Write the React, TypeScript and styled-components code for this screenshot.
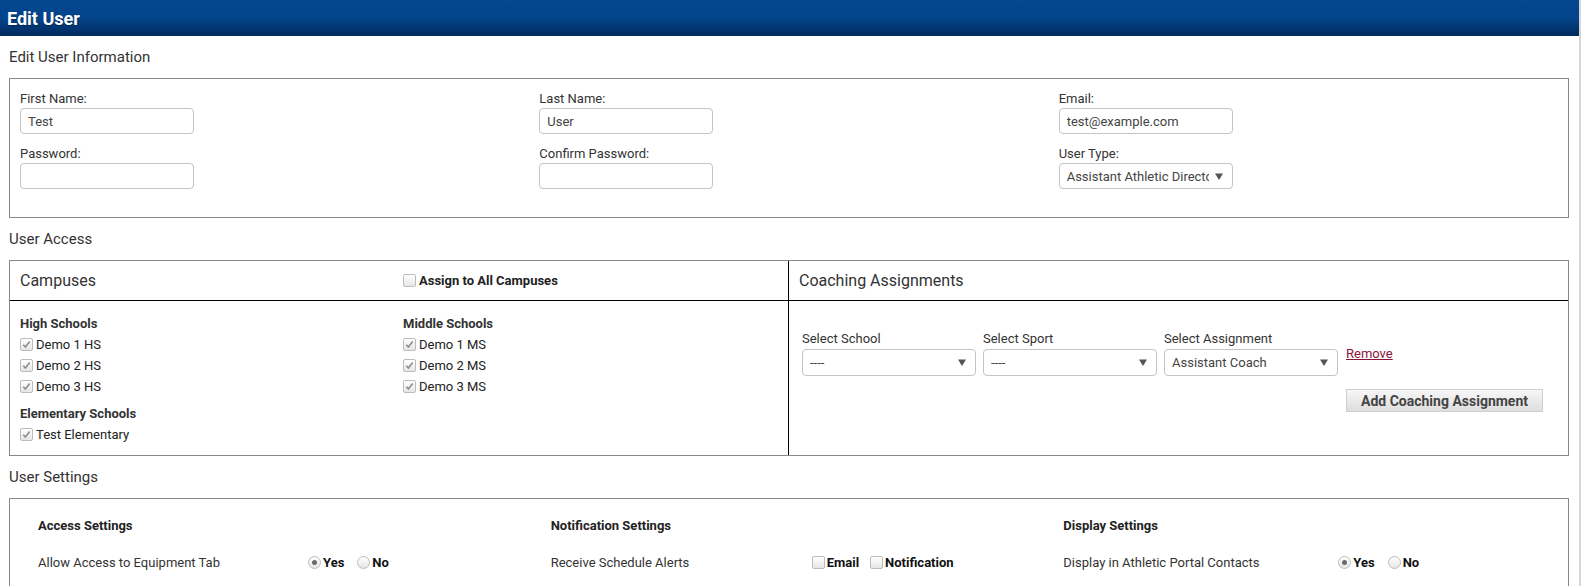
import * as React from 'react';
import styled, { createGlobalStyle } from 'styled-components';

const GlobalStyle = createGlobalStyle`
  html, body {
    margin: 0;
    padding: 0;
    background: #fff;
    overflow: hidden;
  }
  body {
    font-family: Roboto, "Liberation Sans", Arial, sans-serif;
    color: #333;
  }
`;

const Page = styled.div`
  box-sizing: border-box;
  height: 586px;
  overflow: hidden;
  border-right: 2px solid #d6d6d6;
`;

const TitleBar = styled.div`
  height: 36px;
  display: flex;
  align-items: center;
  padding-left: 7px;
  background: linear-gradient(to bottom, #04488f 0%, #03448b 50%, #002a5c 100%);
  color: #fff;
  font-size: 18px;
  font-weight: 700;
  text-shadow: 0 1px 1px rgba(0, 0, 0, 0.35);
`;

const Content = styled.div`
  padding: 0 10px 0 9px;
`;

const SectionTitle = styled.div`
  font-size: 15px;
  line-height: 18px;
  margin: 12px 0;
  color: #333;
`;

const Panel = styled.div`
  border: 1px solid #888;
`;

/* ---------- edit user information ---------- */

const FieldGrid = styled.div`
  display: grid;
  grid-template-columns: repeat(3, 1fr);
  row-gap: 12px;
  padding: 12px 0 28px;
`;

const Field = styled.div`
  padding-left: 10px;
`;

const FieldLabel = styled.div`
  font-size: 13px;
  line-height: 16px;
  margin-bottom: 1px;
  color: #333;
`;

const TextBox = styled.input`
  box-sizing: border-box;
  width: 174px;
  height: 26px;
  border: 1px solid #c4c4c4;
  border-radius: 4px;
  padding: 0 7px;
  font-family: inherit;
  font-size: 13px;
  color: #444;
  outline: none;
  display: block;
`;

const SelectShell = styled.div<{ $width: number; $height: number }>`
  box-sizing: border-box;
  width: ${p => p.$width}px;
  height: ${p => p.$height}px;
  border: 1px solid #c4c4c4;
  border-radius: 4px;
  background: #fff;
  display: flex;
  align-items: center;
  gap: 6px;
  padding: 0 9px 0 7px;
  font-size: 13px;
  color: #444;
`;

const SelectValue = styled.span`
  flex: 1;
  overflow: hidden;
  white-space: nowrap;
`;

const Arrow = () => (
  <svg width="8" height="7" viewBox="0 0 8 7">
    <path d="M0 0.5h8L4 7z" fill="#555" />
  </svg>
);

const Select = ({ value, width = 174, height = 26 }: { value: string; width?: number; height?: number }) => (
  <SelectShell $width={width} $height={height}>
    <SelectValue>{value}</SelectValue>
    <Arrow />
  </SelectShell>
);

/* ---------- checkbox / radio ---------- */

const BoxMark = styled.span<{ $round?: boolean }>`
  box-sizing: border-box;
  flex: none;
  width: 13px;
  height: 13px;
  border: 1px solid #bcbcbc;
  border-radius: ${p => (p.$round ? '50%' : '2px')};
  background: linear-gradient(to bottom, #ffffff, #e6e6e6);
  display: flex;
  align-items: center;
  justify-content: center;
`;

const Dot = styled.span`
  width: 5px;
  height: 5px;
  border-radius: 50%;
  background: #6b6b6b;
`;

const Check = ({ checked }: { checked?: boolean }) => (
  <BoxMark>
    {checked && (
      <svg width="9" height="9" viewBox="0 0 9 9">
        <path d="M1.3 4.8l2.1 2.2 4.3-5.4" fill="none" stroke="#8c8c8c" strokeWidth="1.6" />
      </svg>
    )}
  </BoxMark>
);

const Radio = ({ checked }: { checked?: boolean }) => <BoxMark $round>{checked && <Dot />}</BoxMark>;

/* ---------- user access ---------- */

const AccessPanel = styled(Panel)`
  display: grid;
  grid-template-columns: 1fr 1fr;
`;

const Half = styled.div<{ $divider?: boolean }>`
  border-right: ${p => (p.$divider ? '1px solid #000' : 'none')};
  display: flex;
  flex-direction: column;
`;

const HalfHead = styled.div`
  height: 39px;
  border-bottom: 1px solid #000;
  display: grid;
  grid-template-columns: 383px 1fr;
  align-items: center;
  padding: 0 10px;
`;

const HeadTitle = styled.div`
  font-size: 16px;
  color: #333;
`;

const CampusBody = styled.div`
  display: grid;
  grid-template-columns: 383px 1fr;
  padding: 15px 10px 10px;
`;

const CampusColumn = styled.div`
  display: flex;
  flex-direction: column;
  gap: 9px;
`;

const GroupTitle = styled.div`
  font-size: 13px;
  font-weight: 700;
  line-height: 16px;
  margin-bottom: 2px;
  color: #333;
`;

const CheckItem = styled.label<{ $bold?: boolean }>`
  display: flex;
  align-items: center;
  gap: 3px;
  height: 21px;
  font-size: 13px;
  font-weight: ${p => (p.$bold ? 700 : 400)};
  color: #222;
`;

const CoachBody = styled.div`
  padding: 30px 13px 0;
`;

const AssignmentRow = styled.div`
  display: flex;
  align-items: center;
  gap: 7px;
`;

const SelectLabel = styled.div`
  font-size: 13px;
  line-height: 16px;
  margin-bottom: 2px;
  color: #333;
`;

const RemoveLink = styled.a`
  font-size: 13px;
  color: #8a1538;
  text-decoration: underline;
  margin-left: 1px;
  cursor: pointer;
`;

const ButtonRow = styled.div`
  display: flex;
  justify-content: flex-end;
  margin-top: 13px;
  padding-right: 12px;
`;

const GrayButton = styled.button`
  box-sizing: border-box;
  height: 23px;
  padding: 0 14px;
  border: 1px solid #cfcfcf;
  background: linear-gradient(to bottom, #f7f7f7, #dedede);
  font-family: inherit;
  font-size: 14px;
  font-weight: 700;
  color: #444;
`;

/* ---------- user settings ---------- */

const SettingsGrid = styled(Panel)`
  display: grid;
  grid-template-columns: repeat(3, 1fr);
  padding: 19px 10px 40px;
`;

const SettingsColumn = styled.div`
  padding: 0 18px;
`;

const SettingsHeading = styled.div`
  font-size: 13px;
  font-weight: 700;
  line-height: 16px;
  margin-bottom: 18px;
  color: #222;
`;

const SettingRow = styled.div`
  display: flex;
  align-items: center;
  height: 20px;
`;

const SettingLabel = styled.div<{ $width: number }>`
  width: ${p => p.$width}px;
  font-size: 13px;
  color: #333;
`;

const Choices = styled.div<{ $gap?: number }>`
  display: flex;
  align-items: center;
  gap: ${p => p.$gap ?? 13}px;
`;

const Choice = styled.label`
  display: flex;
  align-items: center;
  gap: 2px;
  font-size: 13px;
  font-weight: 700;
  color: #111;
`;

const campuses = {
  high: ['Demo 1 HS', 'Demo 2 HS', 'Demo 3 HS'],
  middle: ['Demo 1 MS', 'Demo 2 MS', 'Demo 3 MS'],
  elementary: ['Test Elementary'],
};

const CampusGroup = ({ title, items }: { title: string; items: string[] }) => (
  <div>
    <GroupTitle>{title}</GroupTitle>
    {items.map(name => (
      <CheckItem key={name}>
        <Check checked />
        {name}
      </CheckItem>
    ))}
  </div>
);

const YesNo = () => (
  <Choices>
    <Choice>
      <Radio checked />
      Yes
    </Choice>
    <Choice>
      <Radio />
      No
    </Choice>
  </Choices>
);

const App = () => (
  <Page>
    <GlobalStyle />
    <TitleBar>Edit User</TitleBar>
    <Content>
      <SectionTitle>Edit User Information</SectionTitle>
      <Panel>
        <FieldGrid>
          <Field>
            <FieldLabel>First Name:</FieldLabel>
            <TextBox defaultValue="Test" />
          </Field>
          <Field>
            <FieldLabel>Last Name:</FieldLabel>
            <TextBox defaultValue="User" />
          </Field>
          <Field>
            <FieldLabel>Email:</FieldLabel>
            <TextBox defaultValue="test@example.com" />
          </Field>
          <Field>
            <FieldLabel>Password:</FieldLabel>
            <TextBox type="password" />
          </Field>
          <Field>
            <FieldLabel>Confirm Password:</FieldLabel>
            <TextBox type="password" />
          </Field>
          <Field>
            <FieldLabel>User Type:</FieldLabel>
            <Select value="Assistant Athletic Director" />
          </Field>
        </FieldGrid>
      </Panel>

      <SectionTitle>User Access</SectionTitle>
      <AccessPanel>
        <Half $divider>
          <HalfHead>
            <HeadTitle>Campuses</HeadTitle>
            <CheckItem $bold>
              <Check />
              Assign to All Campuses
            </CheckItem>
          </HalfHead>
          <CampusBody>
            <CampusColumn>
              <CampusGroup title="High Schools" items={campuses.high} />
              <CampusGroup title="Elementary Schools" items={campuses.elementary} />
            </CampusColumn>
            <CampusColumn>
              <CampusGroup title="Middle Schools" items={campuses.middle} />
            </CampusColumn>
          </CampusBody>
        </Half>
        <Half>
          <HalfHead>
            <HeadTitle>Coaching Assignments</HeadTitle>
          </HalfHead>
          <CoachBody>
            <AssignmentRow>
              <div>
                <SelectLabel>Select School</SelectLabel>
                <Select value="----" height={27} />
              </div>
              <div>
                <SelectLabel>Select Sport</SelectLabel>
                <Select value="----" height={27} />
              </div>
              <div>
                <SelectLabel>Select Assignment</SelectLabel>
                <Select value="Assistant Coach" height={27} />
              </div>
              <RemoveLink>Remove</RemoveLink>
            </AssignmentRow>
            <ButtonRow>
              <GrayButton>Add Coaching Assignment</GrayButton>
            </ButtonRow>
          </CoachBody>
        </Half>
      </AccessPanel>

      <SectionTitle>User Settings</SectionTitle>
      <SettingsGrid>
        <SettingsColumn>
          <SettingsHeading>Access Settings</SettingsHeading>
          <SettingRow>
            <SettingLabel $width={270}>Allow Access to Equipment Tab</SettingLabel>
            <YesNo />
          </SettingRow>
        </SettingsColumn>
        <SettingsColumn>
          <SettingsHeading>Notification Settings</SettingsHeading>
          <SettingRow>
            <SettingLabel $width={261}>Receive Schedule Alerts</SettingLabel>
            <Choices $gap={11}>
              <Choice>
                <Check />
                Email
              </Choice>
              <Choice>
                <Check />
                Notification
              </Choice>
            </Choices>
          </SettingRow>
        </SettingsColumn>
        <SettingsColumn>
          <SettingsHeading>Display Settings</SettingsHeading>
          <SettingRow>
            <SettingLabel $width={275}>Display in Athletic Portal Contacts</SettingLabel>
            <YesNo />
          </SettingRow>
        </SettingsColumn>
      </SettingsGrid>
    </Content>
  </Page>
);

export default App;
